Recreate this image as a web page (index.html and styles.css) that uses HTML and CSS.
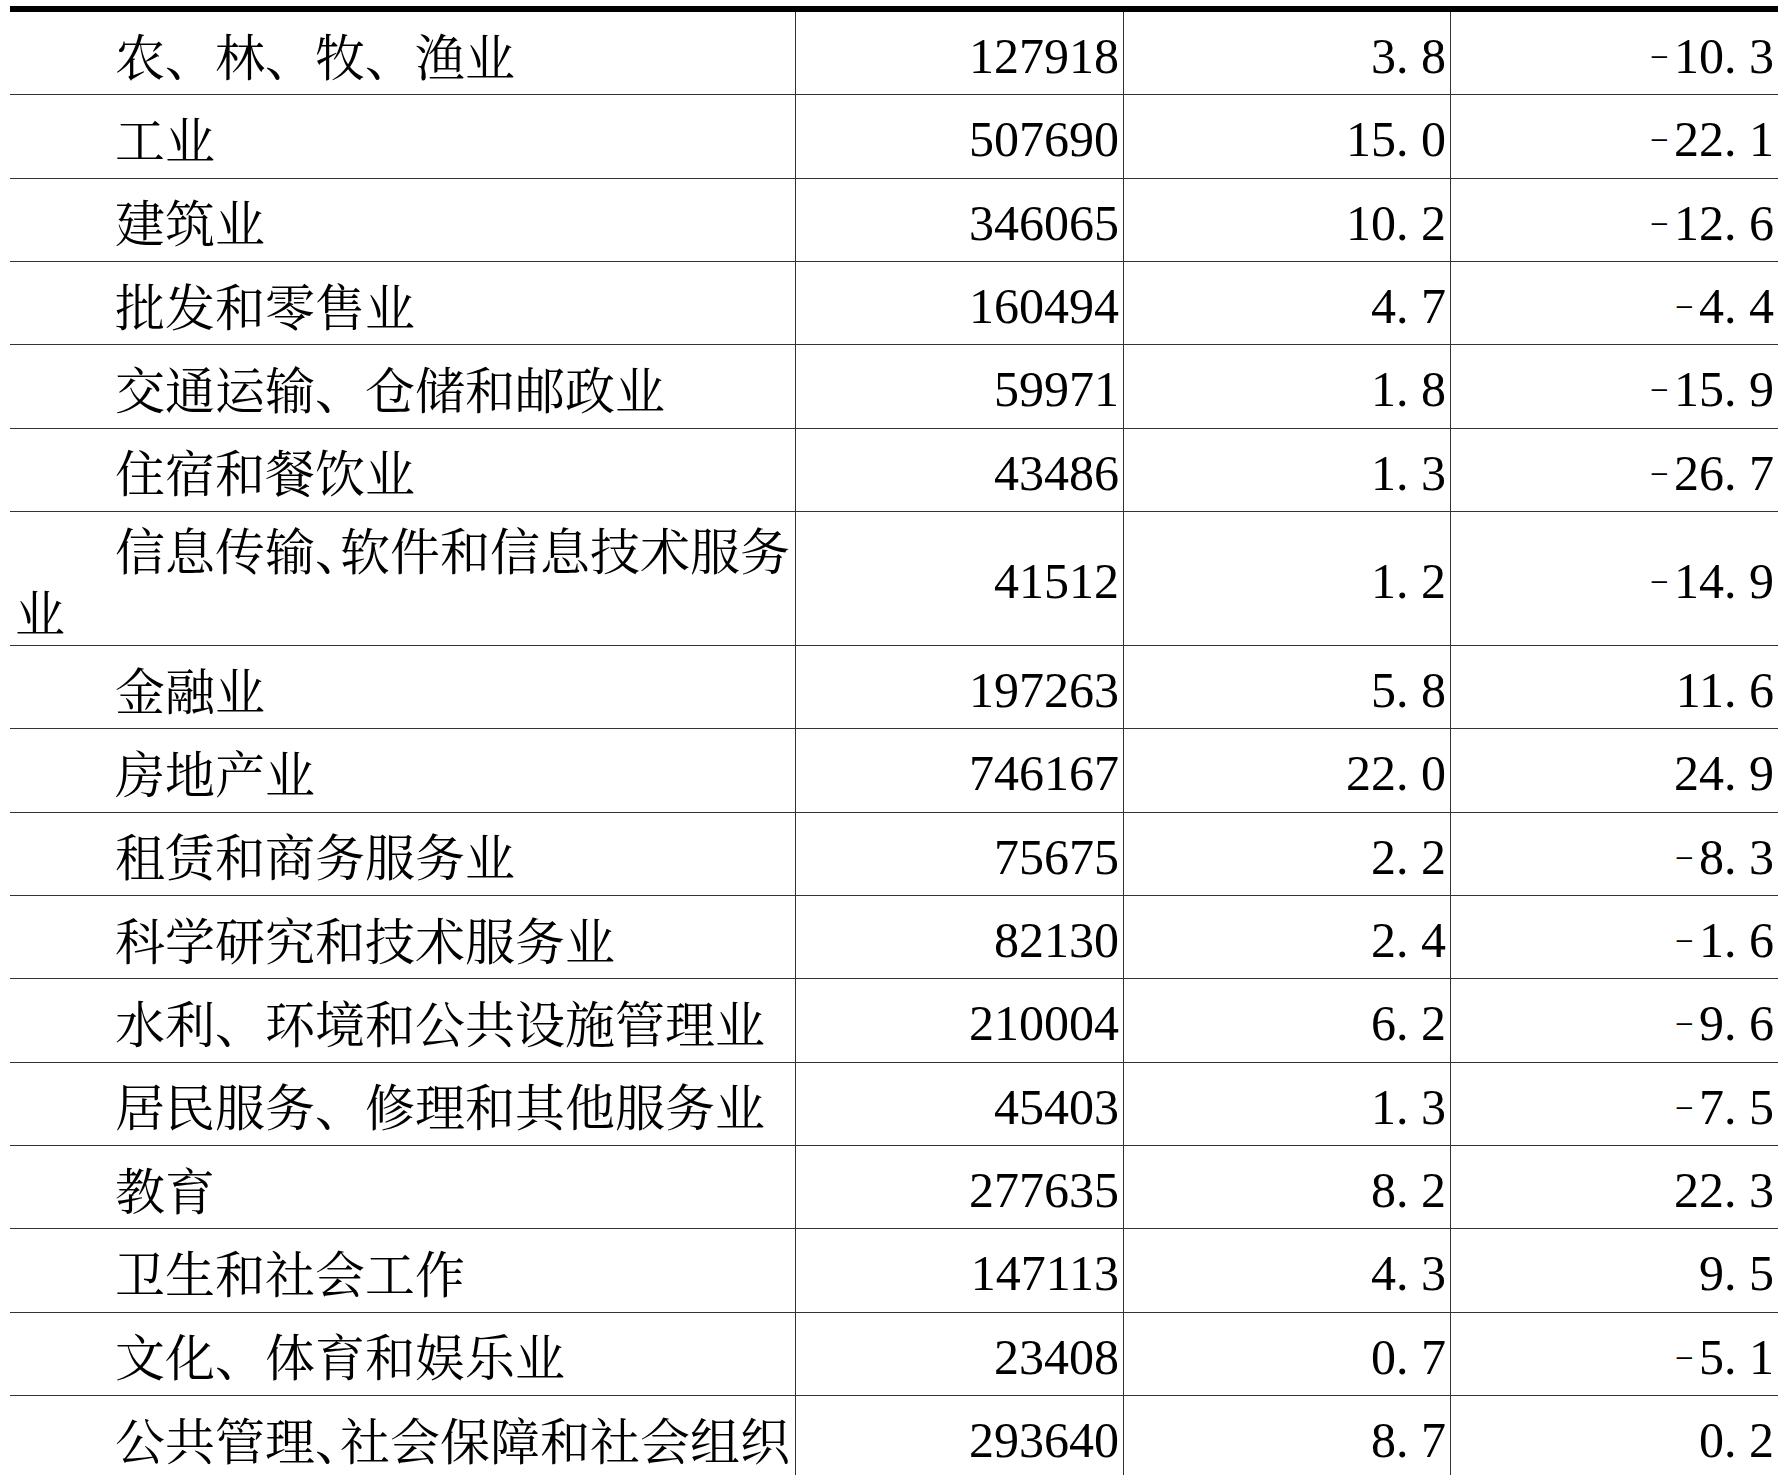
FILE: index.html
```html
<!DOCTYPE html>
<html lang="zh-CN">
<head>
<meta charset="utf-8">
<title>分行业数据</title>
<link rel="stylesheet" href="styles.css">
</head>
<body>
<div class="sheet">
  <div class="cell name"><span>农、林、牧、渔业</span></div>
  <div class="cell num"><span>127918</span></div>
  <div class="cell num"><span>3<span class="dot">.</span>8</span></div>
  <div class="cell num"><span><span class="neg">−</span>10<span class="dot">.</span>3</span></div>

  <div class="cell name"><span>工业</span></div>
  <div class="cell num"><span>507690</span></div>
  <div class="cell num"><span>15<span class="dot">.</span>0</span></div>
  <div class="cell num"><span><span class="neg">−</span>22<span class="dot">.</span>1</span></div>

  <div class="cell name"><span>建筑业</span></div>
  <div class="cell num"><span>346065</span></div>
  <div class="cell num"><span>10<span class="dot">.</span>2</span></div>
  <div class="cell num"><span><span class="neg">−</span>12<span class="dot">.</span>6</span></div>

  <div class="cell name"><span>批发和零售业</span></div>
  <div class="cell num"><span>160494</span></div>
  <div class="cell num"><span>4<span class="dot">.</span>7</span></div>
  <div class="cell num"><span><span class="neg">−</span>4<span class="dot">.</span>4</span></div>

  <div class="cell name"><span>交通运输、仓储和邮政业</span></div>
  <div class="cell num"><span>59971</span></div>
  <div class="cell num"><span>1<span class="dot">.</span>8</span></div>
  <div class="cell num"><span><span class="neg">−</span>15<span class="dot">.</span>9</span></div>

  <div class="cell name"><span>住宿和餐饮业</span></div>
  <div class="cell num"><span>43486</span></div>
  <div class="cell num"><span>1<span class="dot">.</span>3</span></div>
  <div class="cell num"><span><span class="neg">−</span>26<span class="dot">.</span>7</span></div>

  <div class="cell name tight"><span>信息传输、软件和信息技术服务业</span></div>
  <div class="cell num"><span>41512</span></div>
  <div class="cell num"><span>1<span class="dot">.</span>2</span></div>
  <div class="cell num"><span><span class="neg">−</span>14<span class="dot">.</span>9</span></div>

  <div class="cell name"><span>金融业</span></div>
  <div class="cell num"><span>197263</span></div>
  <div class="cell num"><span>5<span class="dot">.</span>8</span></div>
  <div class="cell num"><span>11<span class="dot">.</span>6</span></div>

  <div class="cell name"><span>房地产业</span></div>
  <div class="cell num"><span>746167</span></div>
  <div class="cell num"><span>22<span class="dot">.</span>0</span></div>
  <div class="cell num"><span>24<span class="dot">.</span>9</span></div>

  <div class="cell name"><span>租赁和商务服务业</span></div>
  <div class="cell num"><span>75675</span></div>
  <div class="cell num"><span>2<span class="dot">.</span>2</span></div>
  <div class="cell num"><span><span class="neg">−</span>8<span class="dot">.</span>3</span></div>

  <div class="cell name"><span>科学研究和技术服务业</span></div>
  <div class="cell num"><span>82130</span></div>
  <div class="cell num"><span>2<span class="dot">.</span>4</span></div>
  <div class="cell num"><span><span class="neg">−</span>1<span class="dot">.</span>6</span></div>

  <div class="cell name"><span>水利、环境和公共设施管理业</span></div>
  <div class="cell num"><span>210004</span></div>
  <div class="cell num"><span>6<span class="dot">.</span>2</span></div>
  <div class="cell num"><span><span class="neg">−</span>9<span class="dot">.</span>6</span></div>

  <div class="cell name"><span>居民服务、修理和其他服务业</span></div>
  <div class="cell num"><span>45403</span></div>
  <div class="cell num"><span>1<span class="dot">.</span>3</span></div>
  <div class="cell num"><span><span class="neg">−</span>7<span class="dot">.</span>5</span></div>

  <div class="cell name"><span>教育</span></div>
  <div class="cell num"><span>277635</span></div>
  <div class="cell num"><span>8<span class="dot">.</span>2</span></div>
  <div class="cell num"><span>22<span class="dot">.</span>3</span></div>

  <div class="cell name"><span>卫生和社会工作</span></div>
  <div class="cell num"><span>147113</span></div>
  <div class="cell num"><span>4<span class="dot">.</span>3</span></div>
  <div class="cell num"><span>9<span class="dot">.</span>5</span></div>

  <div class="cell name"><span>文化、体育和娱乐业</span></div>
  <div class="cell num"><span>23408</span></div>
  <div class="cell num"><span>0<span class="dot">.</span>7</span></div>
  <div class="cell num"><span><span class="neg">−</span>5<span class="dot">.</span>1</span></div>

  <div class="cell name tight"><span>公共管理、社会保障和社会组织</span></div>
  <div class="cell num"><span>293640</span></div>
  <div class="cell num"><span>8<span class="dot">.</span>7</span></div>
  <div class="cell num"><span>0<span class="dot">.</span>2</span></div>
</div>
</body>
</html>
```

FILE: styles.css
```css
html, body {
  margin: 0;
  padding: 0;
  background: #fff;
  overflow: hidden;
}

.sheet {
  display: grid;
  grid-template-columns: 785px 328px 327px 328px;
  grid-auto-rows: minmax(83.33px, auto);
  width: 1768px;
  margin: 6px 0 0 10px;
  border-top: 6px solid #000;
  color: #000;
}

.cell {
  box-sizing: border-box;
  display: flex;
  align-items: center;
  border-bottom: 1px solid #333;
  font-size: 50px;
  line-height: 62px;
}

.name {
  padding: 5px 3px 4px 5px;
  font-family: "Noto Serif CJK SC", "Noto Sans CJK SC", serif;
  text-indent: 100px;
}

/* rows whose ideographic comma is compressed to half width */
.tight {
  font-feature-settings: "halt" 1;
}

.num {
  justify-content: flex-end;
  border-left: 1px solid #333;
  padding: 6px 4px 0 0;
  font-family: "Liberation Serif", "Times New Roman", serif;
  white-space: nowrap;
}

.dot {
  display: inline-block;
  width: 0.5em;
  text-align: left;
}

.neg {
  display: inline-block;
  width: 25px;
  padding-left: 1px;
  box-sizing: border-box;
  font-size: 33px;
  line-height: 20px;
  vertical-align: 5px;
  text-align: left;
}
```
